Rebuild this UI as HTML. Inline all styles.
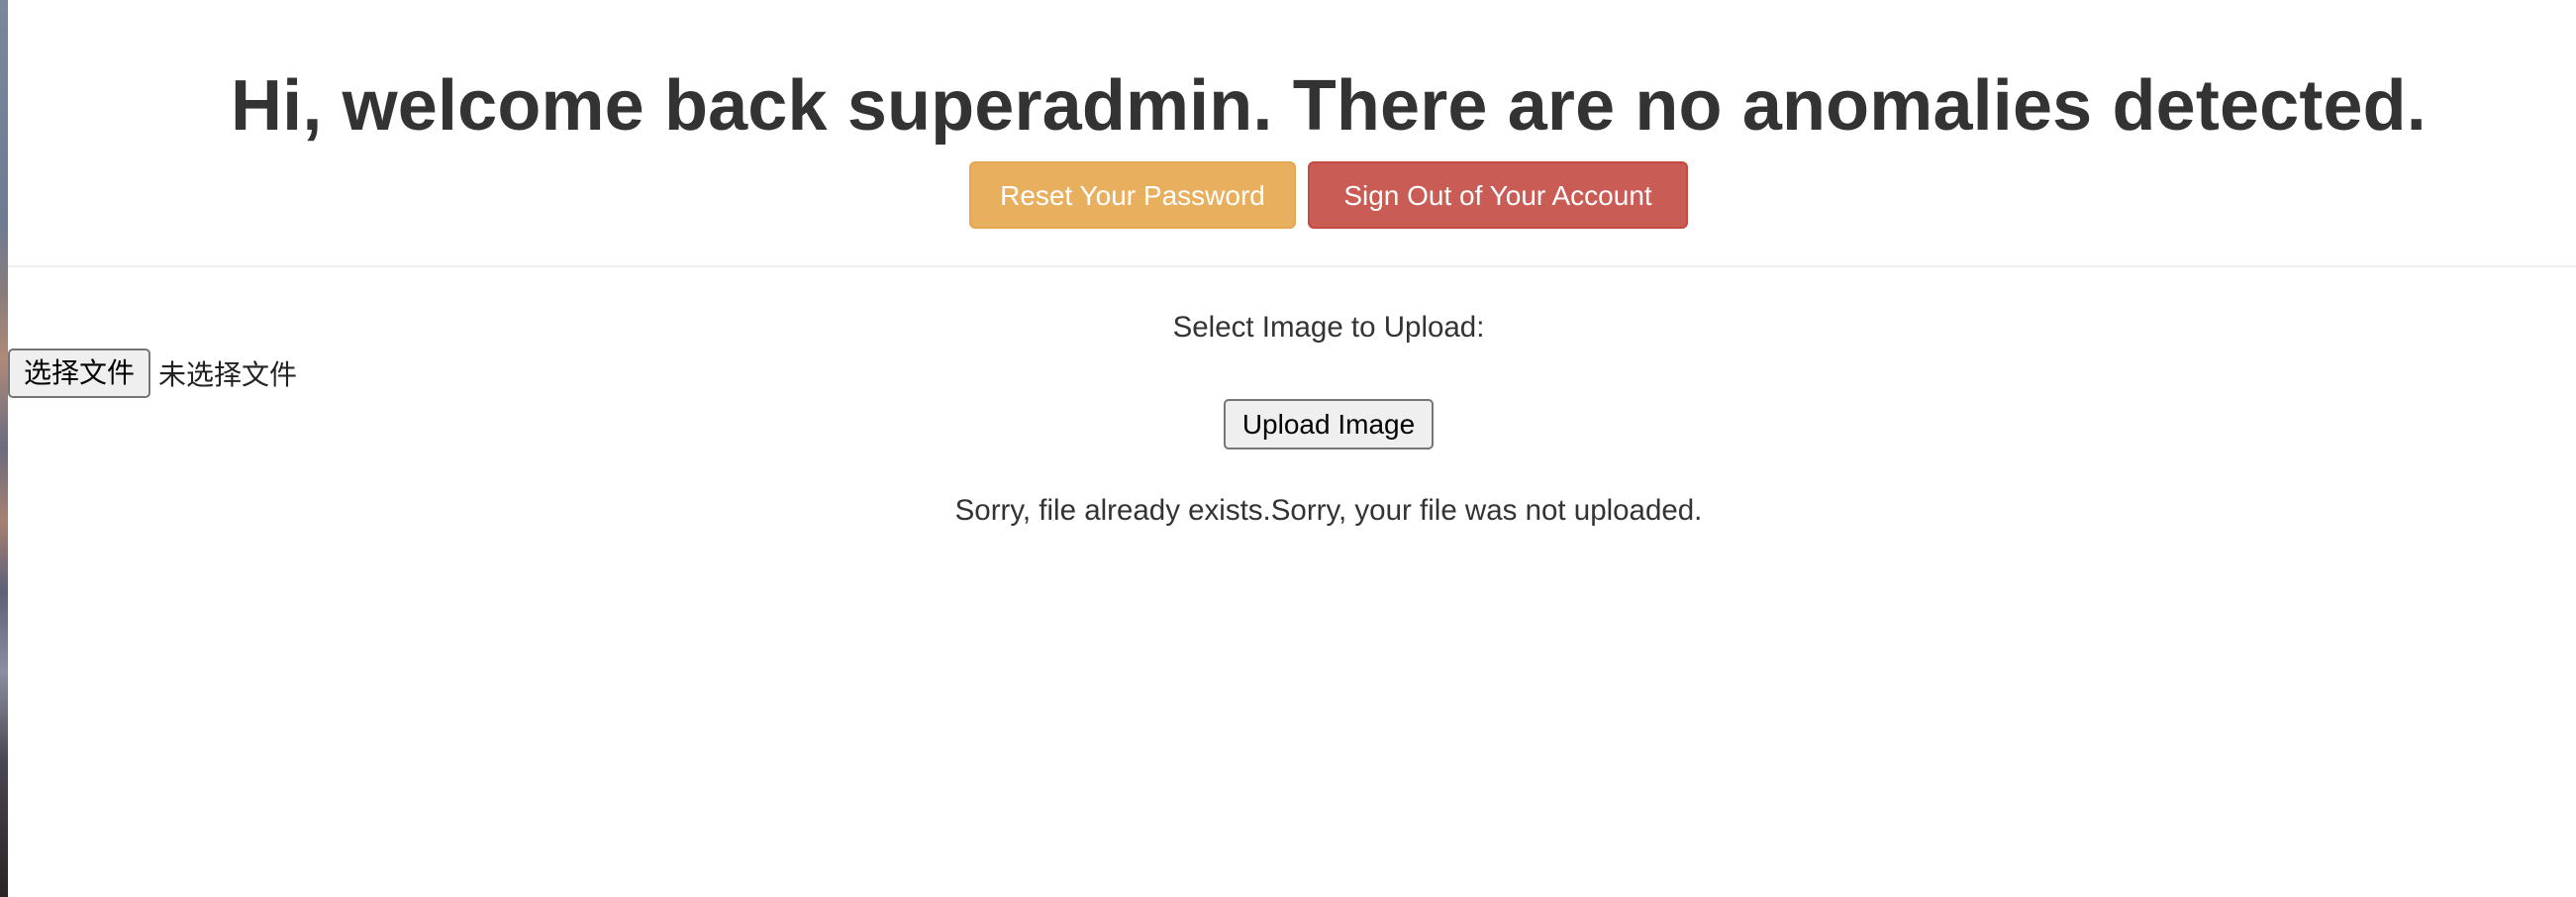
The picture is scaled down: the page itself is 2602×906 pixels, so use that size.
<!DOCTYPE html>
<html><head><meta charset="utf-8"><style>
html,body{margin:0;padding:0;width:2602px;height:906px;overflow:hidden;background:#fff;font-family:"Liberation Sans","Noto Sans CJK SC",sans-serif;color:#333;position:relative}
.strip{position:absolute;left:0;top:0;width:8px;height:906px;background:linear-gradient(#7a869c 0%,#6f7b92 25%,#8a7c7a 33%,#b08a78 40%,#6b6a80 50%,#a88070 58%,#5f6078 66%,#8b8ea0 75%,#4a4650 85%,#2a2426 100%)}
.c{position:absolute;left:0;width:2684px;text-align:center;white-space:nowrap}
h1{margin:0;font-size:72px;font-weight:bold;line-height:1;letter-spacing:0.15px}
.btn{position:absolute;top:163px;height:68px;box-sizing:border-box;border-radius:6px;color:#fff;font-size:28px;line-height:66px;text-align:center}
.hr{position:absolute;left:8px;right:0;top:268px;height:2px;background:#eee}
.t{font-size:29.5px}
.nb{position:absolute;box-sizing:border-box;background:#efefef;border:2px solid #767676;border-radius:5px;color:#000;font-size:28px;text-align:center}
</style></head><body>
<div class="strip"></div>
<div class="c" style="top:71px"><h1>Hi, welcome back superadmin. There are no anomalies detected.</h1></div>
<div class="btn" style="left:979px;width:330px;background:#e8af5f;border:2px solid #e4a650">Reset Your Password</div>
<div class="btn" style="left:1321px;width:384px;background:#c95c55;border:2px solid #c24b44">Sign Out of Your Account</div>
<div class="hr"></div>
<div class="c t" style="top:314px">Select Image to Upload:</div>
<div class="nb" style="left:8px;top:352px;width:144px;height:50px;line-height:46px">选择文件</div>
<div class="t" style="position:absolute;left:160px;top:357px;color:#222;font-size:28px">未选择文件</div>
<div class="nb" style="left:1236px;top:403px;width:212px;height:51px;line-height:47px">Upload Image</div>
<div class="c t" style="top:499px">Sorry, file already exists.Sorry, your file was not uploaded.</div>
</body></html>
